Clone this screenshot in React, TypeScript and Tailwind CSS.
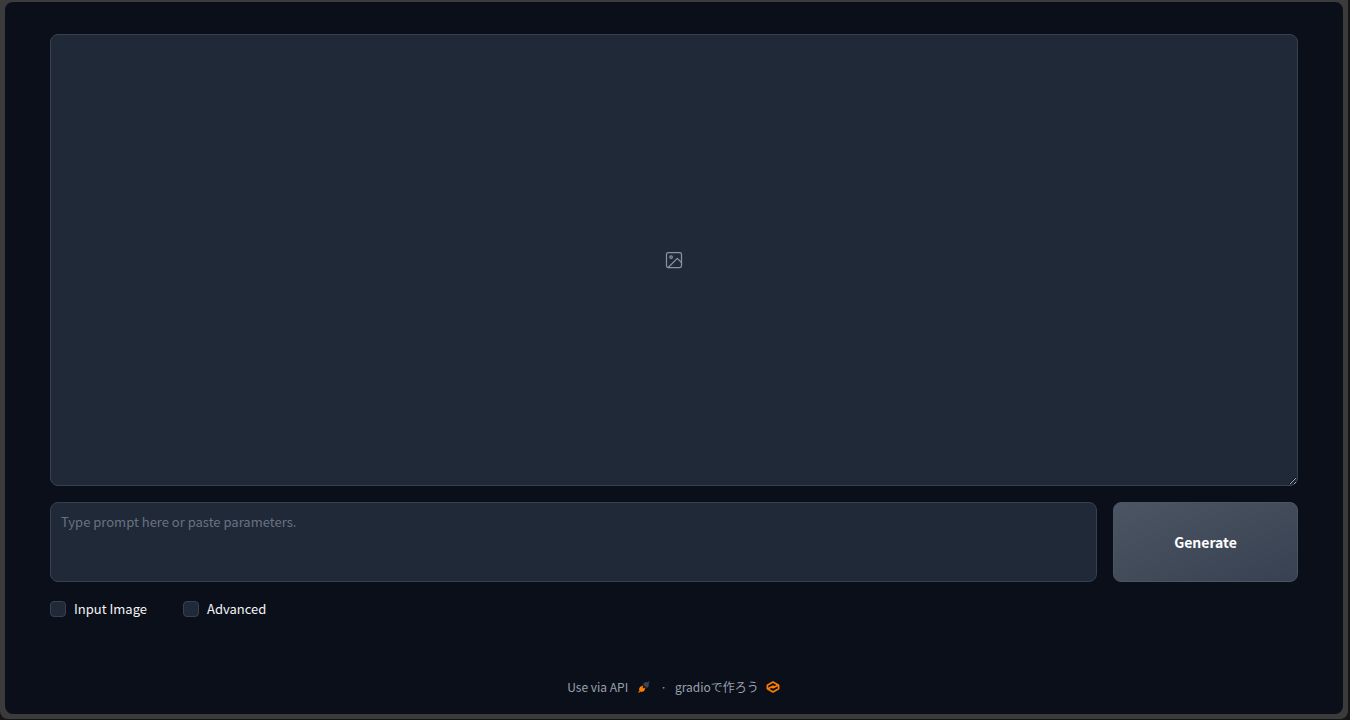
import { useState } from 'react';

const ImagePlaceholderIcon = () => (
  <svg
    className="w-5 h-5"
    viewBox="0 0 24 24"
    fill="none"
    stroke="currentColor"
    strokeWidth="1.5"
    strokeLinecap="round"
    strokeLinejoin="round"
    aria-hidden="true"
  >
    <rect x="3" y="3" width="18" height="18" rx="2" />
    <circle cx="8.5" cy="8.5" r="1.5" />
    <polyline points="21 15 16 10 5 21" />
  </svg>
);

const PlugIcon = () => (
  <svg className="w-3 h-3" viewBox="0 0 28 28" fill="none" aria-hidden="true">
    <path
      d="M26.94 2.94C27.46 2.42 27.46 1.58 26.94 1.06C26.42 0.54 25.58 0.54 25.06 1.06L22.57 3.54C21.12 2.59 19.54 2.43 18.18 2.64C16.55 2.89 15.11 3.67 14.39 4.39L12.39 6.39C12.14 6.64 12 6.98 12 7.33C12 7.69 12.14 8.03 12.39 8.28L19.72 15.61C20.24 16.13 21.09 16.13 21.61 15.61L23.61 13.61C24.33 12.89 25.11 11.45 25.36 9.82C25.57 8.46 25.41 6.88 24.46 5.43L26.94 2.94Z"
      fill="#3c4555"
    />
    <path
      d="M12.28 12.94C12.8 12.42 12.8 11.58 12.28 11.06C11.76 10.54 10.91 10.54 10.39 11.06L8.67 12.78L8.28 12.39C8.03 12.14 7.69 12 7.33 12C6.98 12 6.64 12.14 6.39 12.39L4.39 14.39C3.67 15.11 2.89 16.55 2.64 18.18C2.43 19.54 2.59 21.12 3.54 22.57L1.06 25.06C0.54 25.58 0.54 26.42 1.06 26.94C1.58 27.46 2.42 27.46 2.94 26.94L5.43 24.46C6.88 25.41 8.46 25.57 9.82 25.36C11.45 25.11 12.89 24.33 13.61 23.61L15.61 21.61C16.13 21.09 16.13 20.24 15.61 19.72L15.22 19.33L16.94 17.61C17.46 17.09 17.46 16.24 16.94 15.72C16.42 15.2 15.58 15.2 15.06 15.72L13.33 17.45L10.55 14.67L12.28 12.94Z"
      fill="#ff7c00"
    />
  </svg>
);

const GradioIcon = () => (
  <svg
    className="w-4 h-4"
    viewBox="0 0 576 576"
    fill="none"
    stroke="#ff7c00"
    strokeWidth="62"
    strokeLinejoin="bevel"
    aria-hidden="true"
  >
    <path d="M287.5 106L86 221.5V354.5L287.5 470L489 354.5V221.5L287.5 106Z" />
    <path d="M86 362L287.5 262L350 290" />
    <path d="M489 214L287.5 314L225 286" />
  </svg>
);

interface CheckboxProps {
  label: string;
  checked: boolean;
  onChange: (value: boolean) => void;
}

const Checkbox = ({ label, checked, onChange }: CheckboxProps) => (
  <label className="flex items-center gap-2 text-[13px] leading-[22px] text-gray-100 cursor-pointer">
    <input
      type="checkbox"
      checked={checked}
      onChange={(e) => onChange(e.target.checked)}
      className="appearance-none w-4 h-4 rounded-sm border border-[#374151] bg-[#1f2937] checked:bg-blue-600"
    />
    <span>{label}</span>
  </label>
);

const App = () => {
  const [prompt, setPrompt] = useState<string>('');
  const [inputImage, setInputImage] = useState<boolean>(false);
  const [advanced, setAdvanced] = useState<boolean>(false);

  return (
    <div className="min-h-screen flex flex-col bg-[#161616] pr-0.5 pb-px font-['Noto_Sans_CJK_JP',sans-serif]">
      {/* Window frame */}
      <div className="flex-1 flex flex-col bg-[#3b3b3b] rounded-b-lg pt-0.5 px-[5px] pb-[5px]">
        <main className="flex-1 flex flex-col justify-between rounded-lg bg-[#0b0f19] px-[45px] pt-8 pb-4">
          <div className="flex flex-col gap-4">
            {/* Preview */}
            <div className="h-[452px] flex items-center justify-center resize overflow-hidden rounded-lg border border-[#374151] bg-[#1f2937] text-[#8b939f]">
              <ImagePlaceholderIcon />
            </div>

            {/* Prompt row */}
            <div className="flex gap-4">
              <textarea
                aria-label="Prompt"
                placeholder="Type prompt here or paste parameters."
                value={prompt}
                onChange={(e) => setPrompt(e.target.value)}
                className="flex-1 h-20 resize-none rounded-lg border border-[#374151] bg-[#1f2937] px-2.5 py-2 text-[13px] leading-[22px] text-gray-100 placeholder:text-gray-500 focus:outline-none"
              />
              <button className="w-[185px] rounded-lg border border-[#4b5563] bg-linear-to-br from-[#4b5563] to-[#374151] text-sm font-bold text-white">
                Generate
              </button>
            </div>

            <div className="flex gap-9">
              <Checkbox label="Input Image" checked={inputImage} onChange={setInputImage} />
              <Checkbox label="Advanced" checked={advanced} onChange={setAdvanced} />
            </div>
          </div>

          <footer className="flex items-center justify-center text-xs leading-[22px] text-gray-400">
            <a href="#api" className="flex items-center gap-2.5">
              Use via API
              <PlugIcon />
            </a>
            <span className="ml-2.5 mr-2">·</span>
            <a href="#gradio" className="flex items-center gap-1.5">
              gradioで作ろう
              <GradioIcon />
            </a>
          </footer>
        </main>
      </div>
    </div>
  );
};

export default App;
